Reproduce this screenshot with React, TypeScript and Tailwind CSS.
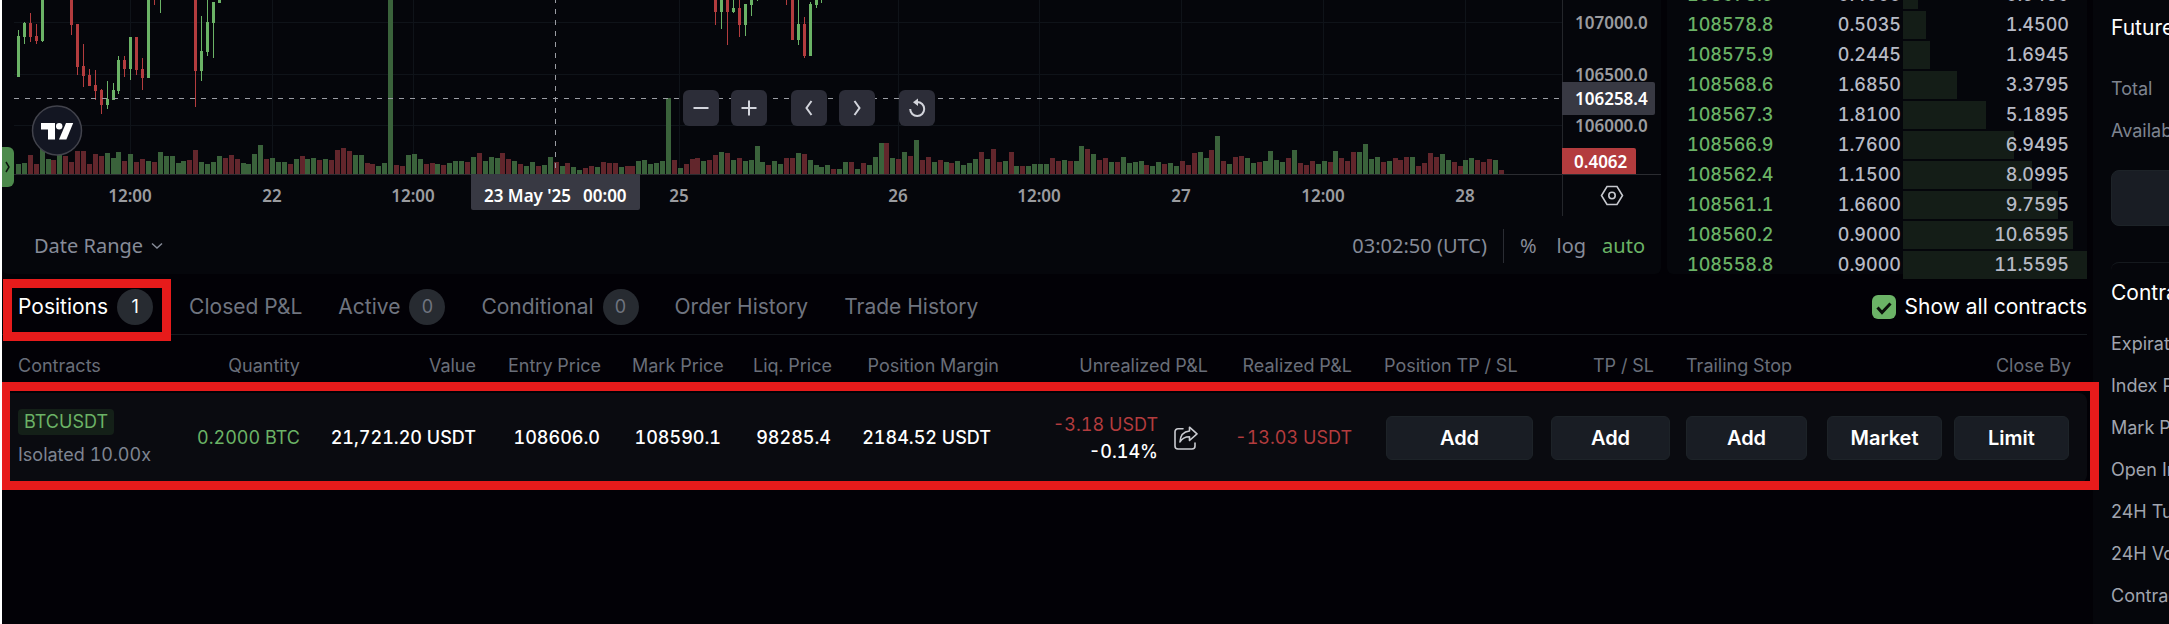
import React from "react";

const GREEN = "#6bb366";
const RED = "#b33c3e";

// one token per bar: direction (g = up, r = down) and height
const VOLUME = (
  "g10 g11 r19 r10 g26 g15 r14 g20 r18 r12 r23 r23 r10 r20 r18 g21 g16 g22 r13 g20 r12 r15 g13 r12 g22 g18 g18 g11 g13 r14 " +
  "r24 g12 g10 g12 g18 r16 r19 r15 g11 g10 g20 g29 r15 g16 g12 g12 r10 g15 r18 g15 g16 r14 g15 r14 r24 r26 r23 g19 g19 r11 " +
  "r10 g8 g11 g174 r9 r8 g19 g20 g15 r10 r11 g10 r9 g11 g13 g13 r12 g17 r21 g13 g17 g16 r21 r15 g13 r10 g8 g12 r8 g9 " +
  "g17 r12 g8 r11 g7 g4 r6 r8 g7 r12 r11 r11 g7 r8 r8 g13 g14 g10 g11 g13 g76 r14 g6 r10 r15 r16 g13 r14 r19 g22 " +
  "r21 g14 r16 g13 g14 g28 g12 r9 g13 g10 r16 r16 g21 r20 g14 g9 g7 g9 r5 g5 g12 r12 g5 r11 g9 g17 g31 r31 g16 r15 " +
  "g22 r18 g34 r14 r17 g12 r14 g12 r11 g13 g9 g11 g15 r22 g15 r25 r12 g13 r22 g8 r8 g8 g10 g10 g10 r16 r13 g14 r13 g13 " +
  "g28 r25 g20 r14 r16 g12 r12 g17 g11 g12 g13 r9 g8 g12 r10 g11 g8 r13 r9 r21 g22 g16 r24 g38 r13 g10 r17 r18 g16 g11 " +
  "r12 g13 g23 g14 g12 r16 g24 r11 r9 r13 g10 g13 r12 g23 r16 r13 r22 g22 g30 g15 g17 r12 g13 r16 r14 r17 g17 r8 r11 r21 " +
  "r17 g20 g14 r12 r8 g14 g16 r14 r12 r15 g14 r4"
).split(" ");

// [bar index, direction, body top, body bottom, wick top, wick bottom]
const CANDLES: [number, string, number, number, number, number][] = [
  [0, "g", 36, 77, 30, 77],
  [1, "g", 23, 37, 22, 44],
  [2, "r", 23, 37, 13, 42],
  [3, "r", 36, 41, 24, 44],
  [4, "g", 0, 41, 0, 42],
  [9, "r", 0, 25, 0, 35],
  [10, "r", 24, 67, 24, 75],
  [11, "r", 66, 76, 44, 87],
  [12, "r", 75, 86, 69, 86],
  [13, "r", 85, 91, 70, 100],
  [14, "r", 90, 105, 89, 114],
  [15, "g", 99, 105, 81, 109],
  [16, "g", 90, 100, 83, 100],
  [17, "g", 60, 91, 56, 94],
  [18, "r", 60, 69, 56, 77],
  [19, "g", 37, 69, 37, 80],
  [20, "r", 37, 70, 37, 75],
  [21, "r", 69, 78, 58, 90],
  [22, "g", 0, 78, 0, 78],
  [23, "r", 0, 0, 0, 5],
  [24, "g", 0, 0, 0, 13],
  [30, "r", 0, 71, 0, 107],
  [31, "g", 51, 71, 16, 81],
  [32, "g", 22, 52, 0, 56],
  [33, "g", 2, 23, 2, 58],
  [34, "g", 0, 3, 0, 3],
  [118, "r", 0, 12, 0, 25],
  [119, "g", 0, 12, 0, 29],
  [120, "r", 0, 12, 0, 45],
  [121, "g", 8, 12, 0, 13],
  [122, "r", 8, 25, 0, 37],
  [123, "g", 4, 25, 4, 36],
  [124, "g", 0, 5, 0, 16],
  [125, "g", 0, 0, 0, 1],
  [130, "r", 0, 0, 0, 5],
  [131, "r", 0, 40, 0, 40],
  [132, "g", 24, 40, 0, 45],
  [133, "r", 24, 56, 17, 58],
  [134, "g", 4, 56, 2, 56],
  [135, "g", 0, 5, 0, 8],
  [136, "g", 0, 0, 0, 3],
];

const TIMES: [number, string][] = [
  [130, "12:00"],
  [272, "22"],
  [413, "12:00"],
  [679, "25"],
  [898, "26"],
  [1039, "12:00"],
  [1181, "27"],
  [1323, "12:00"],
  [1465, "28"],
];

const PRICES: [number, string][] = [
  [22, "107000.0"],
  [74, "106500.0"],
  [125, "106000.0"],
];

const BIDS = [
  ["108578.9", "0.4000", "0.9465"],
  ["108578.8", "0.5035", "1.4500"],
  ["108575.9", "0.2445", "1.6945"],
  ["108568.6", "1.6850", "3.3795"],
  ["108567.3", "1.8100", "5.1895"],
  ["108566.9", "1.7600", "6.9495"],
  ["108562.4", "1.1500", "8.0995"],
  ["108561.1", "1.6600", "9.7595"],
  ["108560.2", "0.9000", "10.6595"],
  ["108558.8", "0.9000", "11.5595"],
];

const TABS: { label: string; count?: number }[] = [
  { label: "Positions", count: 1 },
  { label: "Closed P&L" },
  { label: "Active", count: 0 },
  { label: "Conditional", count: 0 },
  { label: "Order History" },
  { label: "Trade History" },
];

const COLUMNS = [
  { label: "Contracts", width: 178, left: true },
  { label: "Quantity", width: 136 },
  { label: "Value", width: 176 },
  { label: "Entry Price", width: 124 },
  { label: "Mark Price", width: 121 },
  { label: "Liq. Price", width: 110 },
  { label: "Position Margin", width: 168 },
  { label: "Unrealized P&L", width: 209 },
  { label: "Realized P&L", width: 144 },
  { label: "Position TP / SL", width: 167, left: true },
  { label: "TP / SL", width: 135 },
  { label: "Trailing Stop", width: 137, left: true },
  { label: "Close By", width: 280 },
];
const TOTAL_WIDTH = COLUMNS.reduce((sum, c) => sum + c.width, 0);

const DETAILS = [
  "Expiration Date",
  "Index Price",
  "Mark Price",
  "Open Interest",
  "24H Turnover",
  "24H Volume",
  "Contract Value",
];

const barX = (i: number) => Math.round(18 + i * 5.908);

function Chart() {
  return (
    <svg width="1659" height="218" viewBox="2 0 1659 218" className="block" fontFamily="'Noto Sans', sans-serif" fontSize="17" fontWeight="600" shapeRendering="crispEdges">
      <g fill="#0f1319">
        {PRICES.map(([y]) => (
          <rect key={y} x="14" y={y} width="1548" height="1" />
        ))}
        {TIMES.map(([x]) => (
          <rect key={x} x={x} y="0" width="1" height="174" />
        ))}
      </g>
      {VOLUME.map((bar, i) => {
        const h = Number(bar.slice(1));
        return <rect key={i} x={barX(i) - 2} y={174 - h} width="5" height={h} fill={bar[0] === "g" ? "#3a623b" : "#62262c"} />;
      })}
      {CANDLES.map(([i, dir, top, bottom, high, low]) => (
        <g key={i} fill={dir === "g" ? GREEN : RED}>
          <rect x={barX(i)} y={high} width="1" height={low - high} />
          <rect x={barX(i) - 1} y={top} width="3" height={bottom - top} />
        </g>
      ))}
      <path d="M14 98.5H1562" stroke="#9a9ca3" strokeDasharray="5 6" />
      <path d="M555.5 -2V174" stroke="#9a9ca3" strokeDasharray="5 6" />
      <path d="M2 174.5H1661" stroke="#2b2c31" />
      <path d="M1562.5 0V216" stroke="#24262b" />
      <g fill="#9a9b9f" textAnchor="middle">
        {TIMES.map(([x, label]) => (
          <text key={x} x={x} y="202">{label}</text>
        ))}
      </g>
      <g fill="#9a9b9f">
        {PRICES.map(([y, label]) => (
          <text key={y} x="1575" y={y + 7}>{label}</text>
        ))}
      </g>
      <g shapeRendering="auto">
        <path d="M471 174H640V208a2 2 0 0 1-2 2H473a2 2 0 0 1-2-2Z" fill="#383943" />
        <path d="M1562 82h91a2 2 0 0 1 2 2v29a2 2 0 0 1-2 2h-91Z" fill="#383943" />
        <path d="M1562 148h72a2 2 0 0 1 2 2v24h-74Z" fill="#b33c3e" />
        <g fill="#fff">
          <text x="484" y="202">23 May '25</text>
          <text x="583" y="202">00:00</text>
          <text x="1575" y="105">106258.4</text>
          <text x="1574" y="168">0.4062</text>
        </g>
        <g fill="none" stroke="#c6c8ce" strokeWidth="1.6">
          <path d="M1607 186.500h10l5.500 9-5.500 9h-10l-5.500-9Z" />
          <circle cx="1612" cy="195.500" r="3.200" />
        </g>
        <circle cx="57" cy="130.500" r="24.500" fill="#131622" stroke="#42434c" strokeWidth="1.500" />
        <g fill="#fff">
          <path d="M41 123h14v16.500h-7v-10h-7Z" />
          <circle cx="59.200" cy="126.200" r="3.200" />
          <path d="M66 123h7.200l-6.800 16.500h-7.400Z" />
        </g>
      </g>
    </svg>
  );
}

function ChartButton({ label, children }: { label: string; children: React.ReactNode }) {
  return (
    <button aria-label={label} className="flex size-9 items-center justify-center rounded-md bg-[#2c2d38]">
      <svg width="24" height="24" viewBox="0 0 24 24" fill="none" stroke="#d3d5dc" strokeWidth="2">
        {children}
      </svg>
    </button>
  );
}

function ChartPanel() {
  return (
    <section className="relative h-[274px] min-w-0 flex-1 overflow-hidden rounded-b-md bg-[#05060b]">
      <Chart />
      <div className="absolute top-[90px] left-[681px] flex gap-3">
        <ChartButton label="Zoom out"><path d="M4.500 12h15" /></ChartButton>
        <ChartButton label="Zoom in"><path d="M4.500 12h15M12 4.500v15" /></ChartButton>
        <span className="w-0" />
        <ChartButton label="Scroll left"><path d="m14.500 5-5 7 5 7" /></ChartButton>
        <ChartButton label="Scroll right"><path d="m9.500 5 5 7-5 7" /></ChartButton>
        <span className="w-0" />
        <ChartButton label="Reset chart">
          <path d="M5.200 13a7 7 0 1 0 7-7" />
          <path d="M13 2.500v7.500L8 6.200Z" fill="#d3d5dc" stroke="none" />
        </ChartButton>
      </div>
      <button aria-label="Show panel" className="absolute top-[147px] left-0 flex h-10 w-3 items-center justify-center rounded-r-md bg-[#4d8a4c]">
        <svg width="6" height="12" viewBox="0 0 6 12" fill="none" stroke="#0b120c" strokeWidth="1.500">
          <path d="m1 1 3 5-3 5" />
        </svg>
      </button>
      <div className="flex h-14 items-center justify-between pr-4 pl-8 font-['Noto_Sans',sans-serif] text-xl text-[#868b98]">
        <button className="flex items-center gap-2">
          Date Range
          <svg width="12" height="8" viewBox="0 0 12 8" fill="none" stroke="currentColor" strokeWidth="1.500">
            <path d="m1 1.500 5 4.500 5-4.500" />
          </svg>
        </button>
        <div className="flex items-center">
          <span>03:02:50 (UTC)</span>
          <span className="mx-4 h-[34px] w-px bg-[#2a2c33]" />
          <button>%</button>
          <button className="mr-4 ml-5">log</button>
          <button className="text-[#6bb366]">auto</button>
        </div>
      </div>
    </section>
  );
}

function OrderBook() {
  return (
    <section className="h-[274px] w-[420px] shrink-0 rounded-b-md bg-[#05060b]">
      <table className="-mt-5 w-full table-fixed text-lg leading-[30px] font-medium text-[#b7bac5] tabular-nums">
        <colgroup>
          <col className="w-[116px]" />
          <col className="w-[120px]" />
          <col />
        </colgroup>
        <tbody>
          {BIDS.map(([price, size, total]) => (
            <tr key={price} className="h-[30px]">
              <td className="p-0 pl-5 text-[#6bb366]">{price}</td>
              <td className="p-0 pr-0.5 text-right">{size}</td>
              <td className="relative p-0 pr-[18px] text-right">
                <span className="absolute inset-y-px left-0 bg-[#141d17]" style={{ width: `${(Number(total) / 11.5595) * 100}%` }} />
                <span className="relative">{total}</span>
              </td>
            </tr>
          ))}
        </tbody>
      </table>
    </section>
  );
}

function Tabs() {
  return (
    <div className="flex h-[61px] items-center justify-between border-b border-[#15191e] pt-1.5 pl-4 text-[21px]">
      <div className="flex gap-9">
        {TABS.map(({ label, count }, i) => (
          <button key={label} className={i === 0 ? "relative flex h-9 items-center gap-[9px] text-white" : "flex h-9 items-center gap-[9px] text-[#6f747f]"}>
            {label}
            {count !== undefined && (
              <span className="flex size-9 items-center justify-center rounded-full bg-[#272b31] text-lg">{count}</span>
            )}
            {i === 0 && <span className="absolute -top-2.5 -right-[18px] -bottom-4 -left-[15px] border-[9px] border-[#e71b1b]" />}
          </button>
        ))}
      </div>
      <label className="flex items-center gap-[9px] text-white">
        <span className="relative flex size-6">
          <input type="checkbox" defaultChecked className="size-6 appearance-none rounded-md bg-[#6bb366]" />
          <svg viewBox="0 0 24 24" fill="none" stroke="#0a0f0a" strokeWidth="3" className="pointer-events-none absolute inset-0">
            <path d="m5.500 12.500 4.500 5 8.500-9" />
          </svg>
        </span>
        Show all contracts
      </label>
    </div>
  );
}

function ActionButton({ children }: { children: React.ReactNode }) {
  return (
    <button className="h-11 w-full rounded-md border border-[#1d2328] bg-[#191d24] text-xl font-semibold text-white">{children}</button>
  );
}

function Positions() {
  return (
    <div className="relative">
      <table className="w-full table-fixed text-right text-lg leading-6 whitespace-nowrap tabular-nums">
        <colgroup>
          {COLUMNS.map((c) => (
            <col key={c.label} style={{ width: `${(c.width / TOTAL_WIDTH) * 100}%` }} />
          ))}
        </colgroup>
        <thead>
          <tr className="h-[58px] text-[#696e79]">
            {COLUMNS.map((c) => (
              <th key={c.label} className={c.left ? "px-4 pt-1 pb-0 text-left font-normal" : "px-4 pt-1 pb-0 font-normal"}>
                {c.label}
              </th>
            ))}
          </tr>
        </thead>
        <tbody>
          <tr className="h-[90px] bg-[#0a0b10] font-medium text-white">
            <td className="px-4 text-left font-normal">
              <div className="mb-2 inline-block rounded-sm bg-[#142018] px-1.5 py-px text-[#6bb366]">BTCUSDT</div>
              <div className="text-[#7e8490]">Isolated 10.00x</div>
            </td>
            <td className="px-4 font-normal text-[#6bb366]">0.2000 BTC</td>
            <td className="pr-4">21,721.20 USDT</td>
            <td className="px-4">108606.0</td>
            <td className="px-4">108590.1</td>
            <td className="px-4">98285.4</td>
            <td className="pr-6">2184.52 USDT</td>
            <td className="pr-[26px]">
              <div className="flex items-center justify-end gap-4">
                <div className="leading-[27px]">
                  <div className="font-normal text-[#b33c3e]">-3.18 USDT</div>
                  <div>-0.14%</div>
                </div>
                <button aria-label="Share">
                  <svg width="24" height="24" viewBox="0 0 24 24" fill="none" stroke="#c9cbd0" strokeWidth="1.600" strokeLinejoin="round" strokeLinecap="round">
                    <path d="M9 2.800H4a3 3 0 0 0-3 3V20a3 3 0 0 0 3 3h14a3 3 0 0 0 3-3v-3" />
                    <path d="M15.500 1.200l7.500 6.600-7.500 6.700v-3.800c-4.500 0-7.500 1.500-9.500 5.300.3-6.500 4-10.500 9.500-11Z" />
                  </svg>
                </button>
              </div>
            </td>
            <td className="pr-4 font-normal text-[#b33c3e]">-13.03 USDT</td>
            <td className="pr-0.5 pl-[18px]"><ActionButton>Add</ActionButton></td>
            <td className="pl-4"><ActionButton>Add</ActionButton></td>
            <td className="pl-4"><ActionButton>Add</ActionButton></td>
            <td className="rounded-r-lg pr-[18px] pl-5">
              <div className="flex gap-3">
                <ActionButton>Market</ActionButton>
                <ActionButton>Limit</ActionButton>
              </div>
            </td>
          </tr>
        </tbody>
      </table>
      <div className="pointer-events-none absolute top-[47px] -right-3 bottom-[-7px] -left-px border-[9px] border-[#e71b1b]" />
    </div>
  );
}

function AccountPanel() {
  return (
    <aside className="w-[76px] shrink-0 overflow-hidden bg-[#05060b] pl-[18px] whitespace-nowrap">
      <h2 className="mt-3 text-[21px] leading-8 text-white">Futures</h2>
      <dl className="mt-6 text-lg leading-[42px] text-[#7e8490]">
        <dt>Total</dt>
        <dt>Available</dt>
      </dl>
      <div className="mt-[18px] h-14 w-40 rounded-lg border border-[#1d2328] bg-[#191d24]" />
      <div className="mt-9 w-40 rounded-t-lg border-t border-[#15191e]">
        <h2 className="mt-4 text-[21px] leading-7 text-white">Contract Details</h2>
        <dl className="mt-4 text-lg leading-[42px] text-[#a0a4ae]">
          {DETAILS.map((d) => (
            <dt key={d}>{d}</dt>
          ))}
        </dl>
      </div>
    </aside>
  );
}

export default function App() {
  return (
    <div className="flex min-h-screen overflow-hidden border-l-2 border-white bg-[#020106] font-[Inter,sans-serif]">
      <main className="relative z-10 mr-1.5 min-w-0 flex-1">
        <div className="flex gap-1.5">
          <ChartPanel />
          <OrderBook />
        </div>
        <Tabs />
        <Positions />
      </main>
      <AccountPanel />
    </div>
  );
}
